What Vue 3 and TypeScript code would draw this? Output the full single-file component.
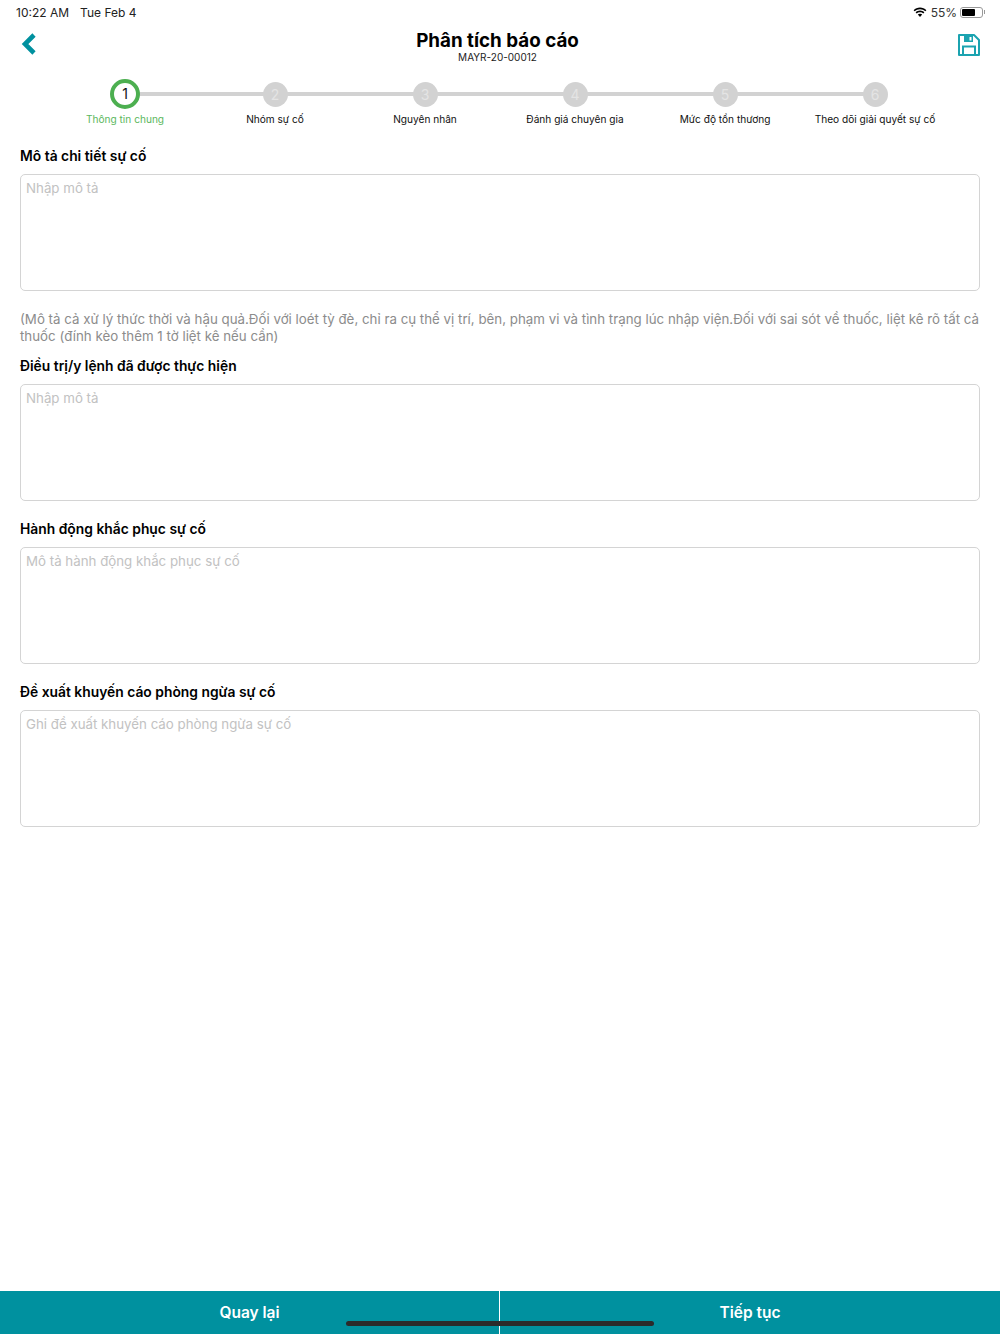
<template>
  <div class="page">
    <!-- Status bar -->
    <div class="status-bar">
      <div class="status-left">
        <span>10:22 AM</span>
        <span>Tue Feb 4</span>
      </div>
      <div class="status-right">
        <svg class="wifi" width="14" height="11" viewBox="0 0 16 12">
          <path d="M8 2.2c2.4 0 4.5.9 6.1 2.4l1.2-1.3C13.400 1.500 10.800.4 8 .4S2.600 1.500.7 3.300l1.200 1.300C3.500 3.100 5.600 2.200 8 2.200z" fill="#000" />
          <path d="M8 5.600c1.500 0 2.800.6 3.800 1.500l1.200-1.300C11.700 4.600 9.900 3.800 8 3.800s-3.700.8-5 2l1.200 1.300c1-.9 2.300-1.500 3.800-1.500z" fill="#000" />
          <path d="M8 7.300c-1 0-1.900.4-2.500 1L8 11l2.500-2.700c-.6-.6-1.500-1-2.500-1z" fill="#000" />
        </svg>
        <span>55%</span>
        <div class="battery"><div class="battery-level"></div></div>
        <div class="battery-cap"></div>
      </div>
    </div>

    <!-- Header -->
    <header class="header">
      <svg class="back" width="16" height="24" viewBox="0 0 16 24">
        <path d="M13 3 L4 12 L13 21" fill="none" stroke="#00919f" stroke-width="4.6" />
      </svg>
      <div class="header-title">
        <h1>Phân tích báo cáo</h1>
        <p>MAYR-20-00012</p>
      </div>
      <svg class="save" width="22" height="22" viewBox="0 0 22 22">
        <path d="M1 1 H16 L21 6 V21 H1 Z" fill="none" stroke="#1ba3b0" stroke-width="2" stroke-linejoin="round" />
        <path d="M6 1.500 H15 V8 H6 Z" fill="#1ba3b0" />
        <path d="M11.500 3 H13.500 V6.500 H11.500 Z" fill="#fff" />
        <path d="M5 20.500 V12.500 H17 V20.500" fill="none" stroke="#1ba3b0" stroke-width="2" />
      </svg>
    </header>

    <!-- Stepper -->
    <div class="stepper">
      <div
        v-for="(s, i) in steps"
        :key="s"
        class="step"
        :class="{ active: i === 0, last: i === steps.length - 1 }"
      >
        <div class="step-circle">{{ i + 1 }}</div>
        <span class="step-label">{{ s }}</span>
      </div>
    </div>

    <!-- Form -->
    <main class="form">
      <section v-for="f in fields" :key="f.label" class="field">
        <h2>{{ f.label }}</h2>
        <div class="textbox">{{ f.placeholder }}</div>
        <p v-if="f.hint" class="hint">{{ f.hint }}</p>
      </section>
    </main>

    <!-- Footer -->
    <footer class="footer">
      <button type="button">Quay lại</button>
      <button type="button">Tiếp tục</button>
      <div class="home-indicator"></div>
    </footer>
  </div>
</template>

<script setup lang="ts">
  const steps = [
    "Thông tin chung",
    "Nhóm sự cố",
    "Nguyên nhân",
    "Đánh giá chuyên gia",
    "Mức độ tổn thương",
    "Theo dõi giải quyết sự cố",
  ]

  const fields = [
    {
      label: "Mô tả chi tiết sự cố",
      placeholder: "Nhập mô tả",
      hint: "(Mô tả cả xử lý thức thời và hậu quả.Đối với loét tỳ đè, chỉ ra cụ thể vị trí, bên, phạm vi và tình trạng lúc nhập viện.Đối với sai sót về thuốc, liệt kê rõ tất cả thuốc (đính kèo thêm 1 tờ liệt kê nếu cần)",
    },
    { label: "Điều trị/y lệnh đã được thực hiện", placeholder: "Nhập mô tả" },
    { label: "Hành động khắc phục sự cố", placeholder: "Mô tả hành động khắc phục sự cố" },
    { label: "Đề xuất khuyến cáo phòng ngừa sự cố", placeholder: "Ghi đề xuất khuyến cáo phòng ngừa sự cố" },
  ]
</script>

<style>
  html,
  body {
    margin: 0;
    background: #fff;
  }
</style>

<style scoped>
  .page {
    height: 1334px;
    display: flex;
    flex-direction: column;
    overflow: hidden;
    background: #fff;
    color: #000;
    font-family: Inter, "Noto Sans", sans-serif;
  }

  /* Status bar */
  .status-bar {
    height: 24px;
    display: flex;
    align-items: center;
    justify-content: space-between;
    padding: 0 15px 0 16px;
    font-size: 12px;
    color: #222;
  }
  .status-left {
    display: flex;
    gap: 11px;
  }
  .status-right {
    display: flex;
    align-items: center;
    color: #333;
  }
  .wifi {
    margin-right: 4px;
  }
  .battery {
    width: 23px;
    height: 11px;
    margin-left: 3px;
    padding: 1px;
    box-sizing: border-box;
    border: 1px solid #999;
    border-radius: 3px;
  }
  .battery-level {
    width: 13px;
    height: 100%;
    background: #000;
    border-radius: 1px;
  }
  .battery-cap {
    width: 1px;
    height: 4px;
    margin-left: 1px;
    background: #999;
  }

  /* Header */
  .header {
    height: 44px;
    display: flex;
    align-items: flex-start;
    justify-content: space-between;
    padding: 0 20px;
  }
  .back {
    margin-top: 8px;
    margin-left: 1px;
  }
  .save {
    margin-top: 10px;
  }
  .header-title {
    text-align: center;
  }
  .header-title h1 {
    margin: 6px 0 0;
    font-size: 18.800px;
    line-height: 22px;
    font-weight: 700;
  }
  .header-title p {
    margin: 0;
    font-size: 10px;
    line-height: 11px;
    color: #222;
  }

  /* Stepper */
  .stepper {
    display: grid;
    grid-template-columns: repeat(6, 150px);
    padding: 11px 50px 0;
    height: 67px;
    box-sizing: content-box;
  }
  .step {
    position: relative;
    display: flex;
    flex-direction: column;
    align-items: center;
  }
  .step::after {
    content: "";
    position: absolute;
    top: 13px;
    left: 50%;
    width: 100%;
    height: 4px;
    background: #d2d2d2;
  }
  .step.last::after {
    display: none;
  }
  .step-circle {
    position: relative;
    z-index: 1;
    width: 25px;
    height: 25px;
    margin: 2.500px 0;
    border-radius: 50%;
    background: #d2d2d2;
    color: #e4e4e4;
    font-size: 14px;
    line-height: 25px;
    text-align: center;
  }
  .active .step-circle {
    width: 30px;
    height: 30px;
    margin: 0;
    box-sizing: border-box;
    border: 4.500px solid #4caf50;
    background: #fff;
    color: #111;
    line-height: 21px;
  }
  .step-label {
    margin-top: 3px;
    font-size: 10.150px;
    line-height: 14px;
    white-space: nowrap;
    color: #111;
  }
  .active .step-label {
    color: #5cb860;
  }

  /* Form */
  .form {
    padding: 0 20px;
    display: flex;
    flex-direction: column;
  }
  .field h2 {
    margin: 0 0 8px;
    font-size: 13.850px;
    line-height: 20px;
    font-weight: 600;
    color: #000;
  }
  .field + .field {
    margin-top: 18px;
  }
  .field:nth-child(2) {
    margin-top: 11px;
  }
  .textbox {
    height: 117px;
    box-sizing: border-box;
    padding: 4px 5px;
    border: 1px solid #d4d4d4;
    border-radius: 5px;
    font-size: 13.300px;
    line-height: 18px;
    color: #c2c2c2;
  }
  .hint {
    margin: 20px 0 0;
    font-size: 13.320px;
    line-height: 17px;
    color: #8c8c8c;
  }

  /* Footer */
  .footer {
    position: relative;
    margin-top: auto;
    height: 43px;
    display: grid;
    grid-template-columns: 1fr 1fr;
    background: #00919f;
  }
  .footer button {
    border: none;
    background: none;
    padding: 0 0 1px;
    font-family: inherit;
    font-size: 15.500px;
    font-weight: 600;
    color: #fff;
  }
  .footer button:first-child {
    border-right: 1px solid #fff;
  }
  .home-indicator {
    position: absolute;
    left: 346px;
    bottom: 8px;
    width: 308px;
    height: 5px;
    border-radius: 3px;
    background: #2b2b2b;
  }
</style>
